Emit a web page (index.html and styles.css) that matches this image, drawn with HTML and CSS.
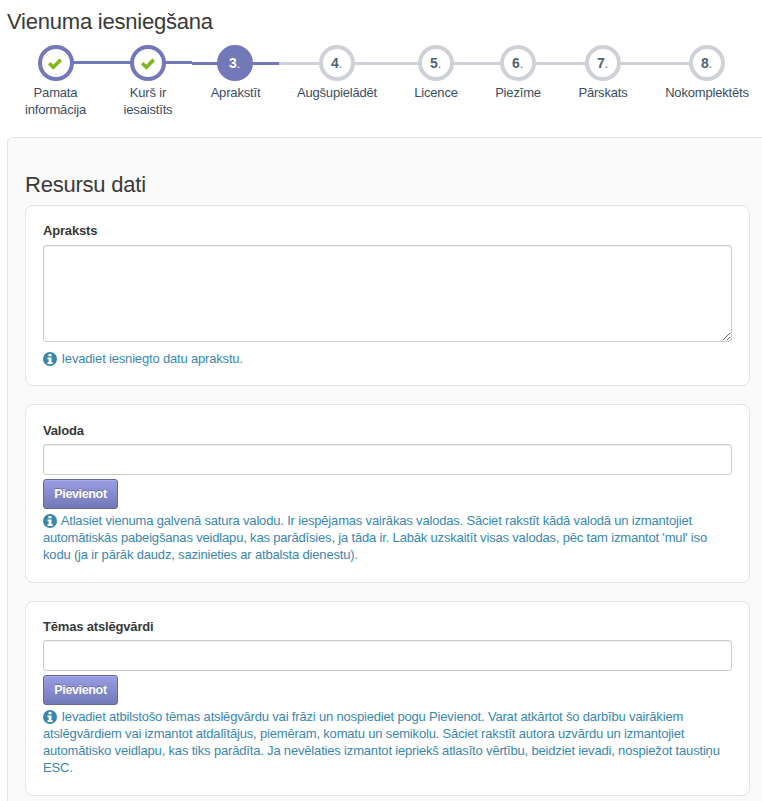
FILE: index.html
```html
<!DOCTYPE html>
<html lang="lv">
<head>
<meta charset="utf-8">
<title>Vienuma iesniegšana</title>
<link rel="stylesheet" href="styles.css">
</head>
<body>
<svg width="0" height="0" class="defs">
  <symbol id="check" viewBox="0 0 14 12"><path fill="#80b71f" d="M0 6.5 2.4 4 5.3 6.8 11.4.5 14 3 5.3 11.7z"/></symbol>
  <symbol id="info" viewBox="0 0 14 14"><circle cx="7" cy="7" r="7" fill="#3a87ad"/><path fill="#fff" d="M5.5 2h3v2.2h-3zM4.5 5.4h4v4.8h1.2V12H4.5v-1.8h1.2V7.2H4.5z"/></symbol>
</svg>
<h1>Vienuma iesniegšana</h1>
<ol class="steps">
  <li class="done"><span class="dot"><svg class="check"><use href="#check"/></svg></span><span class="label">Pamata<br>informācija</span></li>
  <li class="done"><span class="dot"><svg class="check"><use href="#check"/></svg></span><span class="label">Kurš ir<br>iesaistīts</span></li>
  <li class="active"><span class="dot">3<small>.</small></span><span class="label">Aprakstīt</span></li>
  <li><span class="dot">4<small>.</small></span><span class="label">Augšupielādēt</span></li>
  <li><span class="dot">5<small>.</small></span><span class="label">Licence</span></li>
  <li><span class="dot">6<small>.</small></span><span class="label">Piezīme</span></li>
  <li><span class="dot">7<small>.</small></span><span class="label">Pārskats</span></li>
  <li><span class="dot">8<small>.</small></span><span class="label">Nokomplektēts</span></li>
</ol>
<main class="panel">
  <h2>Resursu dati</h2>
  <section class="well description">
    <label for="description">Apraksts</label>
    <textarea id="description"></textarea>
    <p class="help"><svg class="info"><use href="#info"/></svg> Ievadiet iesniegto datu aprakstu.</p>
  </section>
  <section class="well language">
    <label for="language">Valoda</label>
    <input id="language" type="text">
    <button type="button">Pievienot</button>
    <p class="help"><svg class="info"><use href="#info"/></svg> Atlasiet vienuma galvenā satura valodu. Ir iespējamas vairākas valodas. Sāciet rakstīt kādā valodā un izmantojiet<br>automātiskās pabeigšanas veidlapu, kas parādīsies, ja tāda ir. Labāk uzskaitīt visas valodas, pēc tam izmantot 'mul' iso<br>kodu (ja ir pārāk daudz, sazinieties ar atbalsta dienestu).</p>
  </section>
  <section class="well keywords">
    <label for="keywords">Tēmas atslēgvārdi</label>
    <input id="keywords" type="text">
    <button type="button">Pievienot</button>
    <p class="help"><svg class="info"><use href="#info"/></svg> Ievadiet atbilstošo tēmas atslēgvārdu vai frāzi un nospiediet pogu Pievienot. Varat atkārtot šo darbību vairākiem<br>atslēgvārdiem vai izmantot atdalītājus, piemēram, komatu un semikolu. Sāciet rakstīt autora uzvārdu un izmantojiet<br>automātisko veidlapu, kas tiks parādīta. Ja nevēlaties izmantot iepriekš atlasīto vērtību, beidziet ievadi, nospiežot taustiņu<br>ESC.</p>
  </section>
</main>
</body>
</html>
```
FILE: styles.css
```css
* { box-sizing: border-box; }
html { overflow: hidden; background: #fff; }
body {
  margin: 0;
  height: 801px;
  overflow: hidden;
  font: 13px/17px "Liberation Sans", Arial, sans-serif;
  letter-spacing: -.175px;
  color: #393939;
}
.defs { position: absolute; }
h1, h2 { margin: 0; font-size: 22px; font-weight: 400; line-height: 26px; letter-spacing: -.22px; }
h1 { padding: 9px 0 0 7px; }
.steps {
  display: grid;
  grid-template-columns: 97px 88px 87px 116px 82px 82px 88px 120px;
  height: 92px;
  margin: 10px 0 0 7px;
  padding: 0;
  list-style: none;
}
.steps li {
  position: relative;
  display: flex;
  flex-direction: column;
  align-items: center;
  text-align: center;
}
.steps li::before {
  content: "";
  position: absolute;
  top: 17px;
  left: 0;
  width: 100%;
  height: 3px;
  background: #ced1d6;
}
.steps .done::before { top: 16px; background: #7378b8; }
.steps .active::before { background: #7378b8; }
.steps li:first-child::before { left: 50%; width: 50%; }
.steps li:last-child::before { width: 50%; }
.dot {
  position: relative;
  display: flex;
  justify-content: center;
  align-items: baseline;
  width: 36px;
  height: 36px;
  padding-right: 1px;
  border: 4px solid #ced1d6;
  border-radius: 50%;
  background: #fff;
  color: #546474;
  font-size: 14px;
  font-weight: 700;
  line-height: 28px;
  letter-spacing: 0;
}
.dot small { font-size: 12px; font-weight: 400; }
.done .dot { align-items: center; padding: 2px 1px 0 0; border-color: #7378b8; }
.active .dot { margin-right: 1px; border-color: #7378b8; background: #7378b8; color: #fff; }
.check { width: 14px; height: 12px; }
.label { margin-top: 3px; color: #3b4d63; white-space: nowrap; }
.panel {
  width: 775px;
  height: 700px;
  margin-left: 7px;
  padding: 34px 17px 33px;
  border: 1px solid #e3e3e3;
  border-radius: 6px;
  background: #fafafa;
}
.well {
  display: flex;
  flex-direction: column;
  align-items: flex-start;
  width: 725px;
  margin-bottom: 18px;
  padding: 16px 17px;
  border: 1px solid #e3e3e3;
  border-radius: 8px;
  background: #fff;
}
.description { height: 181px; margin-top: 7px; }
.language { height: 179px; }
.keywords { height: 195px; }
label { margin-bottom: 6px; font-weight: 700; }
.language label, .keywords label { margin-bottom: 5px; }
.language { padding-top: 17px; }
textarea, input {
  display: block;
  width: 689px;
  margin: 0;
  border: 1px solid #ccc;
  border-radius: 3px;
  background: #fff;
  box-shadow: inset 0 1px 1px rgba(0, 0, 0, .075);
}
textarea { height: 97px; resize: vertical; }
input { height: 31px; }
button {
  width: 75px;
  height: 30px;
  margin: 4px 0 3px;
  padding: 0;
  border: 1px solid #6367a2;
  border-radius: 3px;
  background: linear-gradient(#9a9ee3, #7378b8);
  box-shadow: inset 0 1px 0 rgba(255, 255, 255, .15);
  color: #fff;
  font: 700 12.5px/18px "Liberation Sans", Arial, sans-serif;
  letter-spacing: -.35px;
  text-shadow: 0 -1px 0 rgba(0, 0, 0, .25);
}
.help { margin: 0; color: #3a87ad; white-space: nowrap; }
.description .help { margin-top: 8px; }
.info { width: 14px; height: 14px; margin-right: 1px; vertical-align: -3px; }
```
